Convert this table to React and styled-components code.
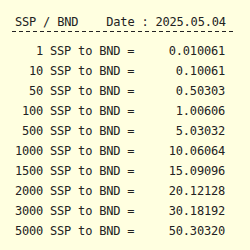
import React from 'react';
import styled, { createGlobalStyle } from 'styled-components';

const GlobalStyle = createGlobalStyle`
  html, body {
    margin: 0;
    padding: 0;
    background: #ffffe0;
  }
`;

const Page = styled.div`
  width: 250px;
  height: 250px;
  box-sizing: border-box;
  padding: 15px 0 0 15px;
  font-family: "DejaVu Sans Mono", "Liberation Mono", monospace;
  font-size: 12px;
  letter-spacing: -0.2px;
  color: #222;
  overflow: hidden;
`;

const Header = styled.div`
  line-height: 14px;
  white-space: pre;
`;

// dashed rule under the header, 32 dashes of 4px every 7px
const Divider = styled.div`
  width: 224px;
  height: 1px;
  margin: 2px 0 0 -3px;
  background: repeating-linear-gradient(90deg, #222 0 4px, transparent 4px 7px);
`;

const Rates = styled.div`
  display: grid;
  grid-template-columns: 28px 91px 91px;
  grid-auto-rows: 20px;
  align-items: center;
  margin-top: 9px;
  line-height: 20px;
`;

const Amount = styled.span`
  text-align: right;
`;

const Label = styled.span`
  white-space: pre;
`;

const Value = styled.span`
  text-align: right;
`;

const rates = [
  ['1', '0.010061'],
  ['10', '0.10061'],
  ['50', '0.50303'],
  ['100', '1.00606'],
  ['500', '5.03032'],
  ['1000', '10.06064'],
  ['1500', '15.09096'],
  ['2000', '20.12128'],
  ['3000', '30.18192'],
  ['5000', '50.30320'],
];

export default function App() {
  return (
    <>
      <GlobalStyle />
      <Page>
        <Header>{'SSP / BND    Date : 2025.05.04'}</Header>
        <Divider />
        <Rates>
          {rates.map(([amount, value]) => (
            <React.Fragment key={amount}>
              <Amount>{amount}</Amount>
              <Label>{' SSP to BND ='}</Label>
              <Value>{value}</Value>
            </React.Fragment>
          ))}
        </Rates>
      </Page>
    </>
  );
}
